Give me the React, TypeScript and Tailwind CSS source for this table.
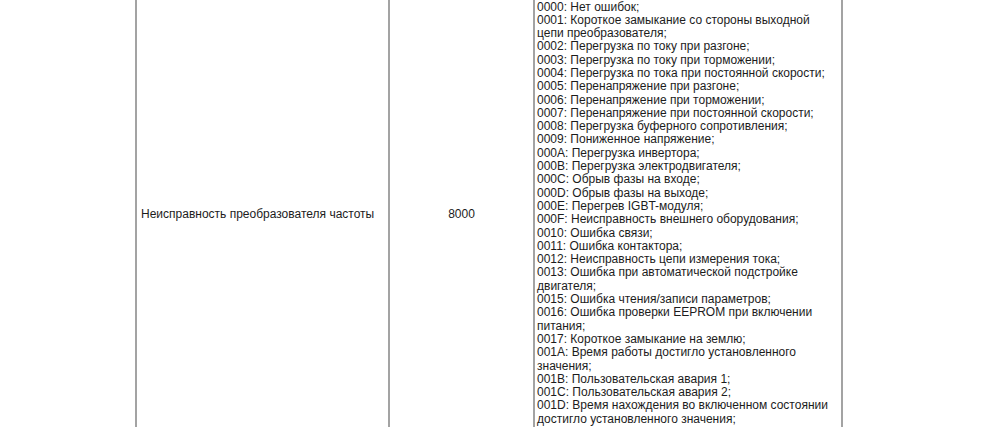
const errorLines = [
  '0000: Нет ошибок;',
  '0001: Короткое замыкание со стороны выходной',
  'цепи преобразователя;',
  '0002: Перегрузка по току при разгоне;',
  '0003: Перегрузка по току при торможении;',
  '0004: Перегрузка по тока при постоянной скорости;',
  '0005: Перенапряжение при разгоне;',
  '0006: Перенапряжение при торможении;',
  '0007: Перенапряжение при постоянной скорости;',
  '0008: Перегрузка буферного сопротивления;',
  '0009: Пониженное напряжение;',
  '000A: Перегрузка инвертора;',
  '000B: Перегрузка электродвигателя;',
  '000C: Обрыв фазы на входе;',
  '000D: Обрыв фазы на выходе;',
  '000E: Перегрев IGBT-модуля;',
  '000F: Неисправность внешнего оборудования;',
  '0010: Ошибка связи;',
  '0011: Ошибка контактора;',
  '0012: Неисправность цепи измерения тока;',
  '0013: Ошибка при автоматической подстройке',
  'двигателя;',
  '0015: Ошибка чтения/записи параметров;',
  '0016: Ошибка проверки EEPROM при включении',
  'питания;',
  '0017: Короткое замыкание на землю;',
  '001A: Время работы достигло установленного',
  'значения;',
  '001B: Пользовательская авария 1;',
  '001C: Пользовательская авария 2;',
  '001D: Время нахождения во включенном состоянии',
  'достигло установленного значения;',
]

export default function App() {
  return (
    <div className="h-[427px] w-[1000px] overflow-hidden bg-white font-['Liberation_Sans',Arial,sans-serif] text-[12px] text-[#1c1c1c]">
      <div className="ml-[135px] flex h-full w-[708px]">
        <div className="flex w-[255px] items-center border-x-2 border-[#a3a3a3] pl-[4px]">
          Неисправность преобразователя частоты
        </div>
        <div className="flex w-[143px] items-center justify-center">8000</div>
        <div className="flex-1 border-x-2 border-[#a3a3a3] pt-[0.5px] pl-[2px] leading-[13.3px]">
          {errorLines.map((line, i) => (
            <div key={i} className="whitespace-nowrap">
              {line}
            </div>
          ))}
        </div>
      </div>
    </div>
  )
}
